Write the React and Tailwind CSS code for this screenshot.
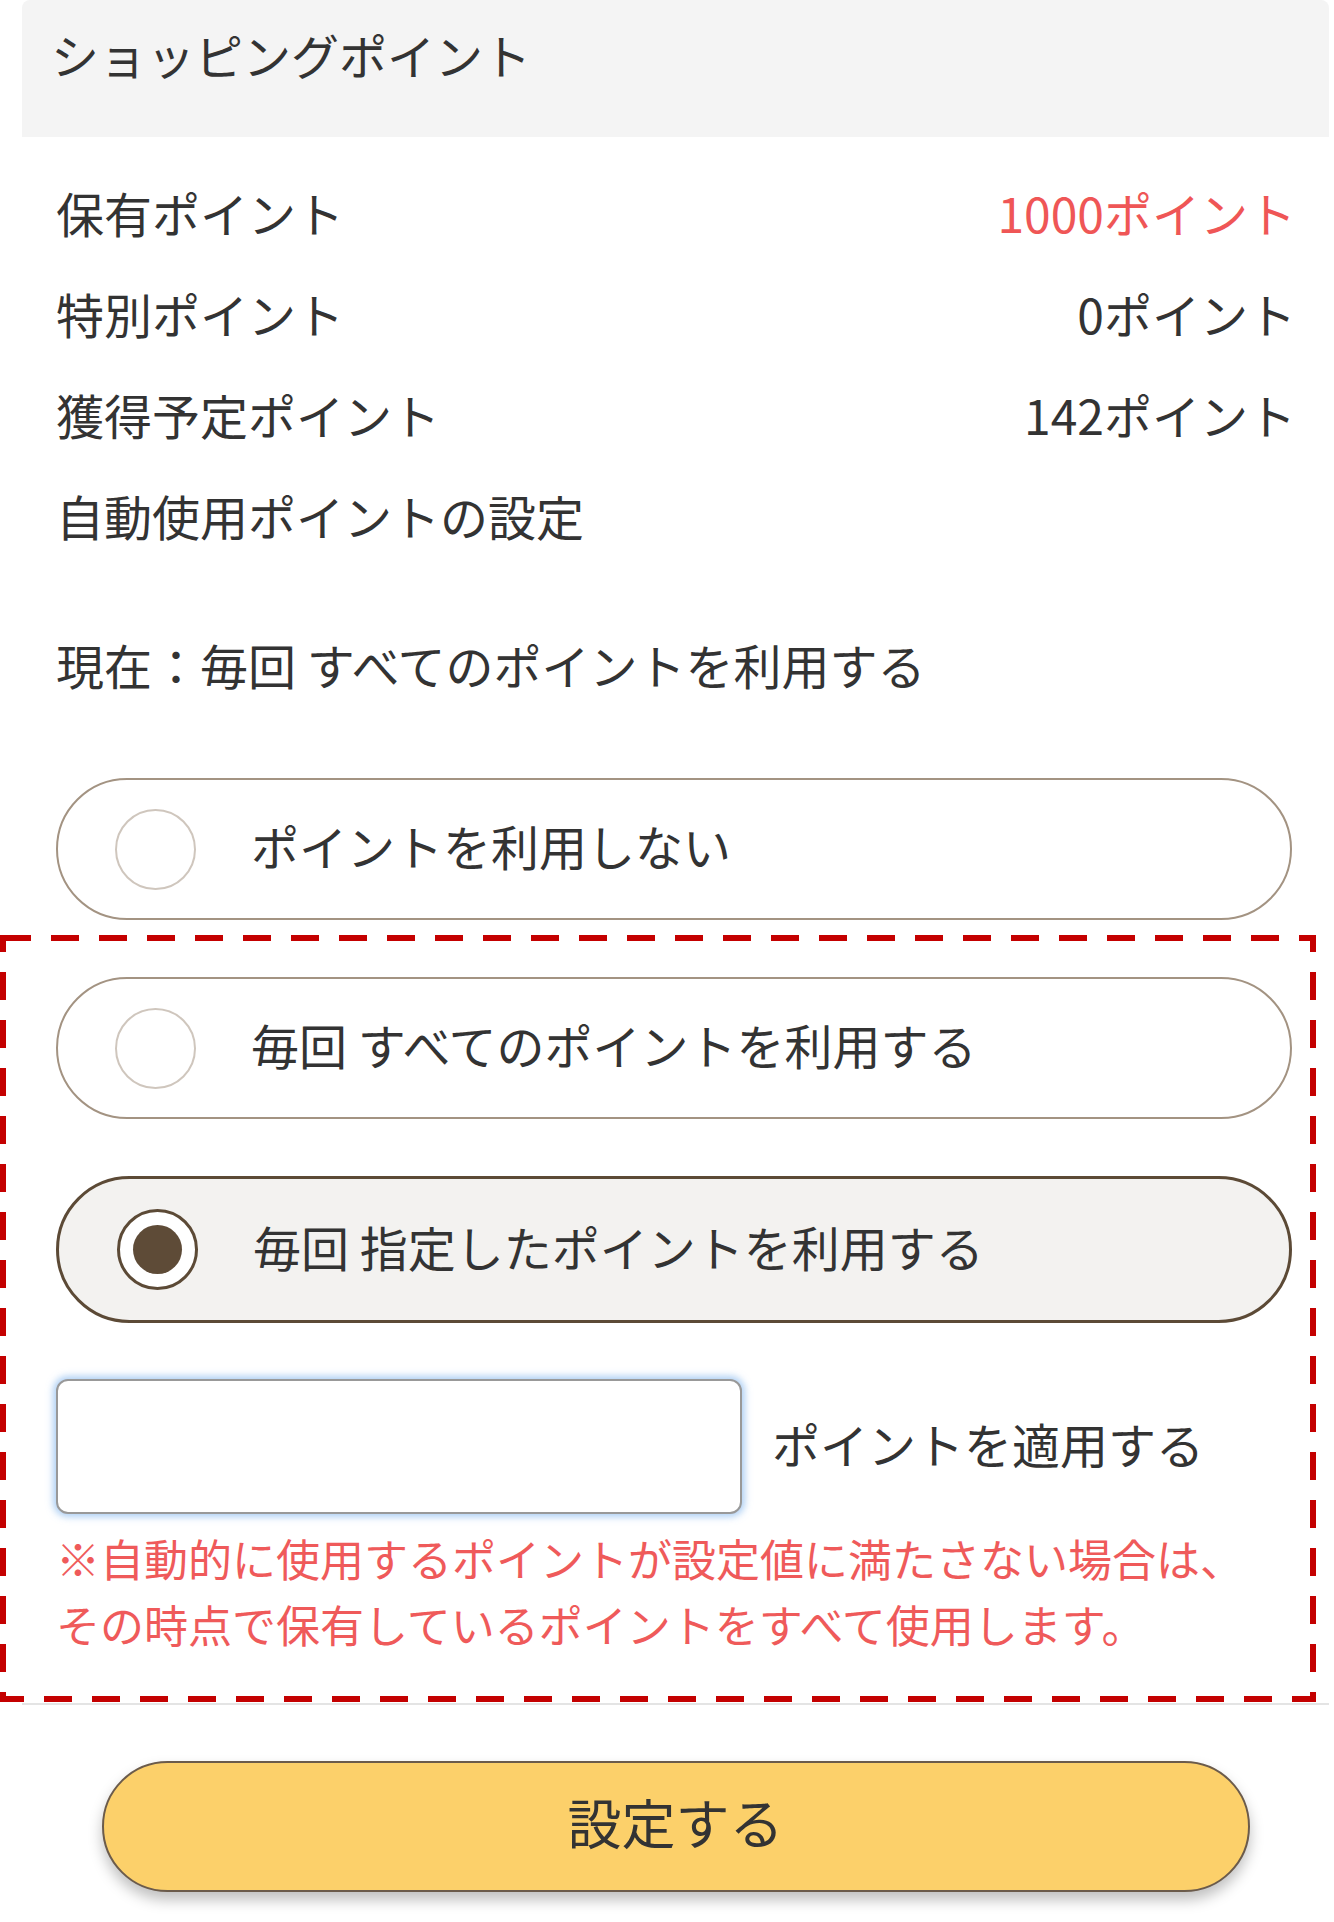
import { useState } from "react";

const rows = [
  { label: "保有ポイント", value: "1000ポイント", red: true },
  { label: "特別ポイント", value: "0ポイント" },
  { label: "獲得予定ポイント", value: "142ポイント" },
];

function Radio({ checked }) {
  if (checked) {
    return (
      <span className="w-[81px] h-[81px] shrink-0 rounded-full border-[3px] border-[#5c4a36] bg-white flex items-center justify-center">
        <span className="w-[49px] h-[49px] rounded-full bg-[#5e4b37]" />
      </span>
    );
  }
  return (
    <span className="w-[81px] h-[81px] shrink-0 rounded-full border-2 border-[#cfc6bd] bg-white" />
  );
}

function Option({ label, checked, onClick }) {
  return (
    <button
      type="button"
      onClick={onClick}
      className={
        checked
          ? "w-full h-[147px] flex items-center gap-[55px] pl-[58px] rounded-full border-[3px] border-[#5c4a36] bg-[#f3f2f0] text-left"
          : "w-full h-[142px] flex items-center gap-[55px] pl-[57px] rounded-full border-2 border-[#a39382] bg-white text-left"
      }
    >
      <Radio checked={checked} />
      <span className="pb-[8px] text-[48px] leading-[72px] text-[#333]">{label}</span>
    </button>
  );
}

export default function App() {
  const [mode, setMode] = useState(2);
  const [points, setPoints] = useState("");

  return (
    <div className="w-[1334px] min-h-[1922px] bg-white font-['Noto_Sans_CJK_JP',sans-serif] text-[#333]">
      <div className="ml-[22px] w-[1307px] border-b-2 border-[#e4e4e4]">
        {/* 見出し */}
        <div className="h-[137px] bg-[#f4f4f4] rounded-t-lg pl-[29px] pt-[18px]">
          <h2 className="text-[48px] leading-[72px] text-[#333]">ショッピングポイント</h2>
        </div>

        <div className="pl-[34px] pr-[37px] pt-[28px]">
          {rows.map((r) => (
            <div key={r.label} className="h-[101px] pb-[8px] flex items-center justify-between text-[48px]">
              <span>{r.label}</span>
              <span className={r.red ? "-mr-[4px] text-[#ef5656]" : "-mr-[4px] text-[#333]"}>{r.value}</span>
            </div>
          ))}
          <div className="h-[101px] pb-[8px] flex items-center text-[48px]">自動使用ポイントの設定</div>

          <div className="mt-[49px] h-[100px] pb-[8px] flex items-center text-[48px]">
            現在：毎回 すべてのポイントを利用する
          </div>

          <div className="mt-[60px]">
            <Option label="ポイントを利用しない" checked={mode === 0} onClick={() => setMode(0)} />
          </div>

          {/* 赤い点線の枠 */}
          <div className="relative pt-[57px] pb-[46px]">
            <svg
              className="absolute top-[15px] left-[-56px] pointer-events-none"
              width="1316"
              height="767"
            >
              <rect
                x="3"
                y="3"
                width="1310"
                height="761"
                fill="none"
                stroke="#c40000"
                strokeWidth="6"
                strokeDasharray="28 20"
              />
            </svg>

            <Option label="毎回 すべてのポイントを利用する" checked={mode === 1} onClick={() => setMode(1)} />
            <div className="mt-[57px]">
              <Option label="毎回 指定したポイントを利用する" checked={mode === 2} onClick={() => setMode(2)} />
            </div>

            <div className="mt-[56px] flex items-center">
              <input
                type="text"
                value={points}
                onChange={(e) => setPoints(e.target.value)}
                className="w-[686px] h-[135px] rounded-[12px] border-2 border-[#999] bg-white px-4 text-[48px] outline-none shadow-[0_0_7px_3px_rgba(110,170,235,0.55)]"
              />
              <span className="ml-[30px] pb-[8px] text-[48px] leading-[72px]">ポイントを適用する</span>
            </div>

            <p className="mt-[11px] text-[44px] leading-[66px] text-[#ef5a5a]">
              ※自動的に使用するポイントが設定値に満たさない場合は、
              <br />
              その時点で保有しているポイントをすべて使用します。
            </p>
          </div>
        </div>
      </div>

      <div className="ml-[22px] w-[1307px] mt-[56px] flex justify-center">
        <button
          type="button"
          className="w-[1148px] h-[131px] pb-[10px] rounded-full border-2 border-[#6b5b4b] bg-[#fcd06a] text-[54px] text-[#333] shadow-[0_8px_14px_rgba(0,0,0,0.25)]"
        >
          設定する
        </button>
      </div>
    </div>
  );
}
